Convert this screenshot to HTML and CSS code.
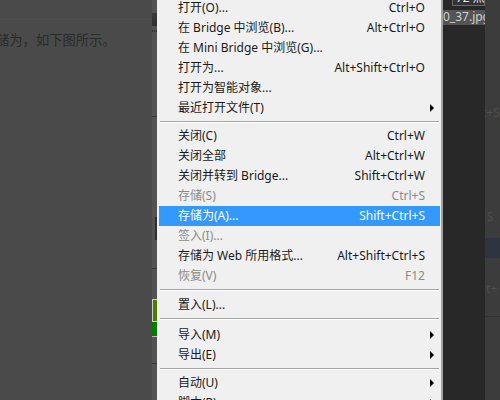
FILE: index.html
```html
<!DOCTYPE html>
<html>
<head>
<meta charset="utf-8">
<link rel="stylesheet" href="styles.css">
</head>
<body>
<div class="screen">
  <div class="doc">
    <div class="doc-top"></div>
    <p class="doc-text">储为，如下图所示。</p>
  </div>
  <div class="strip">
    <div class="s-gap" style="height:13px"></div>
    <div class="s-dark" style="height:13px"></div>
    <div class="s-gap" style="height:4px"></div>
    <div class="s-dots"></div>
    <div class="s-gap" style="height:84px"></div>
    <div class="s-line"></div>
    <div class="s-gap" style="height:100px"></div>
    <div class="s-bar" style="height:23px"></div>
    <div class="s-gap" style="height:28px"></div>
    <div class="s-line"></div>
    <div class="s-gap" style="height:30px"></div>
    <div class="s-olive" style="height:23px"></div>
    <div class="s-green" style="height:15px"></div>
    <div class="s-gap" style="height:26px"></div>
    <div class="s-line"></div>
  </div>
  <div class="menu">
    <div class="item"><span class="label">打开(O)...</span><span class="key">Ctrl+O</span><span class="arr"></span></div>
    <div class="item"><span class="label">在 Bridge 中浏览(B)...</span><span class="key">Alt+Ctrl+O</span><span class="arr"></span></div>
    <div class="item"><span class="label">在 Mini Bridge 中浏览(G)...</span><span class="key"></span><span class="arr"></span></div>
    <div class="item"><span class="label">打开为...</span><span class="key">Alt+Shift+Ctrl+O</span><span class="arr"></span></div>
    <div class="item"><span class="label">打开为智能对象...</span><span class="key"></span><span class="arr"></span></div>
    <div class="item"><span class="label">最近打开文件(T)</span><span class="key"></span><span class="arr"><i class="tri"></i></span></div>
    <div class="sep"></div>
    <div class="item"><span class="label">关闭(C)</span><span class="key">Ctrl+W</span><span class="arr"></span></div>
    <div class="item"><span class="label">关闭全部</span><span class="key">Alt+Ctrl+W</span><span class="arr"></span></div>
    <div class="item"><span class="label">关闭并转到 Bridge...</span><span class="key">Shift+Ctrl+W</span><span class="arr"></span></div>
    <div class="item disabled"><span class="label">存储(S)</span><span class="key">Ctrl+S</span><span class="arr"></span></div>
    <div class="item active"><span class="label">存储为(A)...</span><span class="key">Shift+Ctrl+S</span><span class="arr"></span></div>
    <div class="item disabled"><span class="label">签入(I)...</span><span class="key"></span><span class="arr"></span></div>
    <div class="item"><span class="label">存储为 Web 所用格式...</span><span class="key">Alt+Shift+Ctrl+S</span><span class="arr"></span></div>
    <div class="item disabled"><span class="label">恢复(V)</span><span class="key">F12</span><span class="arr"></span></div>
    <div class="sep sep-9"></div>
    <div class="item"><span class="label">置入(L)...</span><span class="key"></span><span class="arr"></span></div>
    <div class="sep sep-10"></div>
    <div class="item"><span class="label">导入(M)</span><span class="key"></span><span class="arr"><i class="tri"></i></span></div>
    <div class="item"><span class="label">导出(E)</span><span class="key"></span><span class="arr"><i class="tri"></i></span></div>
    <div class="sep"></div>
    <div class="item"><span class="label">自动(U)</span><span class="key"></span><span class="arr"><i class="tri"></i></span></div>
    <div class="item"><span class="label">脚本(R)</span><span class="key"></span><span class="arr"><i class="tri"></i></span></div>
  </div>
  <div class="canvas">
    <div class="zoombox">72 点</div>
    <div class="tab">0_37.jpg</div>
  </div>
  <div class="side">
    <div class="side-a"></div>
    <div class="side-txt">t+S</div>
    <div class="side-b"></div>
    <div class="side-txt s2">S</div>
    <div class="side-band"></div>
    <div class="side-txt s3">lt+</div>
    <div class="side-line"></div>
  </div>
</div>
</body>
</html>
```

FILE: styles.css
```css
html, body {
  margin: 0;
  padding: 0;
  width: 500px;
  height: 400px;
  overflow: hidden;
  background: #4a4a4a;
}

.screen {
  display: flex;
  width: 500px;
  height: 400px;
  overflow: hidden;
  font-family: "Noto Sans", "Noto Sans CJK SC", sans-serif;
}

.doc {
  width: 152px;
  flex: none;
  background: #4a4a4a;
  overflow: hidden;
}

.doc-top {
  height: 20px;
  border-bottom: 1px solid #505050;
  box-sizing: border-box;
}

.doc-text {
  margin: 11px 0 0 -4px;
  font-size: 13.3px;
  line-height: 18px;
  color: #2b2b2b;
  white-space: nowrap;
  font-family: "Noto Sans CJK SC", sans-serif;
}

.strip {
  width: 5px;
  flex: none;
  background: #535353;
  display: flex;
  flex-direction: column;
}

.s-gap { flex: none; }
.s-dark { background: linear-gradient(#3a3a3a, #2e2e2e); }
.s-dots {
  height: 2px;
  background: repeating-linear-gradient(90deg, #2e2e2e 0 1px, #535353 1px 2px);
}
.s-line { height: 1px; background: #3a3a3a; }
.s-bar { width: 2px; margin-left: 3px; background: #2f2f2f; }
.s-olive { background: #4d7b00; border: 1px solid #cfcfcf; border-right: none; box-sizing: border-box; }
.s-green { background: #007a00; border-bottom: 1px solid #bbbbbb; box-sizing: border-box; }

.menu {
  width: 286px;
  flex: none;
  background: #f0f0f0;
  box-sizing: border-box;
  padding: 0 1px 0 2px;
  margin-top: -2px;
  border-right: 2px solid #a0a0a0;
  height: 410px;
  font-size: 12px;
  color: #1a1a1a;
}

.item {
  display: flex;
  align-items: center;
  height: 20px;
  line-height: 20px;
  padding-left: 19px;
  white-space: nowrap;
}

.label { flex: 1; }
.key { flex: none; }
.arr {
  width: 15px;
  flex: none;
  display: flex;
  align-items: center;
}

.tri {
  display: block;
  width: 0;
  height: 0;
  margin-left: 5px;
  border-top: 4px solid transparent;
  border-bottom: 4px solid transparent;
  border-left: 4px solid #000;
}

.disabled { color: #8c8c8c; }

.active {
  background: #3399ff;
  color: #ffffff;
}

.sep {
  height: 8px;
  box-sizing: border-box;
  padding-top: 3px;
  margin: 0 1px;
}
.sep-9 { height: 9px; }
.sep-10 { height: 10px; }
.sep::before {
  content: "";
  display: block;
  height: 1px;
  background: #a5a5a5;
  border-bottom: 1px solid #ffffff;
}

.canvas {
  width: 42px;
  flex: none;
  background: #282828;
  overflow: hidden;
}

.zoombox {
  margin: -11px 0 0 9px;
  height: 15px;
  border: 1px solid #6a6a6a;
  background: #333333;
  color: #e8e8e8;
  font-size: 12px;
  line-height: 15px;
  padding-left: 3px;
  white-space: nowrap;
}

.tab {
  margin-top: 4px;
  height: 15px;
  background: #545454;
  color: #d0d0d0;
  font-size: 12px;
  line-height: 14px;
  white-space: nowrap;
  overflow: hidden;
}

.side {
  flex: 1;
  background: #3c3c3c;
  display: flex;
  flex-direction: column;
  overflow: hidden;
}

.side-a { height: 106px; flex: none; }
.side-txt {
  flex: none;
  height: 14px;
  font-size: 12px;
  line-height: 14px;
  color: #4e4e4e;
  white-space: nowrap;
  margin-left: -3px;
}
.side-b { height: 90px; flex: none; background: #3c3c3c; }
.side-txt.s2 { margin-left: 2px; height: 28px; }
.side-band { height: 20px; flex: none; background: #2e3540; }
.side-txt.s3 { margin-top: 24px; margin-left: -2px; }
.side-line { margin-top: 20px; height: 1px; background: #333333; flex: none; }
```
